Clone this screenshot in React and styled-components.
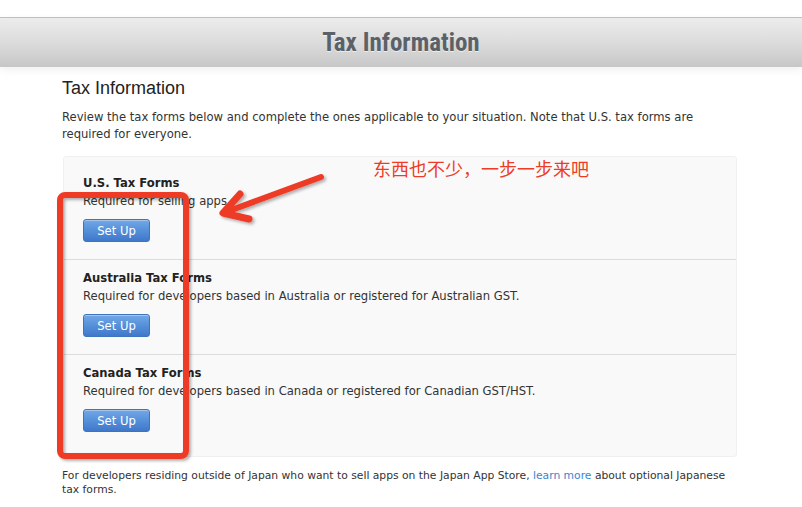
import React from 'react';
import styled, { createGlobalStyle } from 'styled-components';

// Global
const GlobalStyle = createGlobalStyle`
  html, body {
    margin: 0;
    padding: 0;
    background: #ffffff;
  }
  body {
    font-family: "DejaVu Sans", "Liberation Sans", sans-serif;
    color: #333;
  }
`;

// Style
const Page = styled.div`
  position: relative;
  width: 802px;
  height: 507px;
  overflow: hidden;
  padding-top: 17px;
  box-sizing: border-box;
`;

const Header = styled.header`
  height: 49px;
  border-top: 1px solid #bfbfbf;
  background: linear-gradient(to bottom, #ececec 0%, #dcdcdc 50%, #c7c7c7 100%);
  box-shadow: 0 3px 8px rgba(0, 0, 0, 0.06);
  display: flex;
  align-items: center;
  justify-content: center;
`;

const HeaderTitle = styled.h1`
  margin: 0;
  font-family: "Liberation Sans Narrow", "Roboto Condensed", "Liberation Sans", sans-serif;
  font-weight: bold;
  font-size: 25px;
  color: #5b6168;
  text-shadow: 0 1px 0 rgba(255, 255, 255, 0.6);
`;

const Content = styled.main`
  width: 675px;
  margin-left: 62px;
`;

const Title = styled.h2`
  margin: 10px 0 0;
  font-family: "Liberation Sans", sans-serif;
  font-weight: normal;
  font-size: 18px;
  line-height: 22px;
  color: #222;
`;

const Intro = styled.p`
  margin: 10px 0 0;
  font-size: 11.6px;
  line-height: 17px;
  color: #333;
`;

const Panel = styled.section`
  margin: 13px 0 0 1px;
  padding: 8px 0 7px;
  background: #f9f9f9;
  border: 1px solid #f0f0f0;
  border-radius: 3px;
`;

const Row = styled.div`
  padding: 9px 19px 17px;
  border-bottom: ${(p) => (p.last ? 'none' : '1px solid #dcdcdc')};
`;

const RowTitle = styled.h3`
  margin: 0;
  font-size: 11.6px;
  line-height: 18px;
  font-weight: bold;
  color: #222;
`;

const RowText = styled.div`
  font-size: 11.6px;
  line-height: 19px;
  color: #333;
`;

const SetUpButton = styled.button`
  display: block;
  margin-top: 8px;
  width: 67px;
  height: 23px;
  padding: 0;
  border: 1px solid #3e74be;
  border-radius: 3px;
  background: linear-gradient(to bottom, #74a8e6 0%, #5590da 50%, #3f78c9 100%);
  color: #fff;
  font-family: "DejaVu Sans", sans-serif;
  font-size: 11.6px;
  box-shadow: inset 0 1px 0 rgba(255, 255, 255, 0.35);
  cursor: pointer;
`;

const Footnote = styled.p`
  margin: 12px 0 0;
  font-size: 10.75px;
  line-height: 14px;
  color: #333;
`;

const MoreLink = styled.a`
  color: #3a86cc;
  text-decoration: none;
`;

// Annotation layer (drawn over the page)
const Note = styled.span`
  position: absolute;
  left: 373px;
  top: 156px;
  font-family: "Noto Sans CJK SC", sans-serif;
  font-size: 18px;
  line-height: 24px;
  color: #ee3b26;
`;

const Markup = styled.svg`
  position: absolute;
  left: 0;
  top: 0;
  pointer-events: none;
`;

const forms = [
  { name: 'U.S. Tax Forms', text: 'Required for selling apps' },
  {
    name: 'Australia Tax Forms',
    text: 'Required for developers based in Australia or registered for Australian GST.',
  },
  {
    name: 'Canada Tax Forms',
    text: 'Required for developers based in Canada or registered for Canadian GST/HST.',
  },
];

const App = () => {
  return (
    <Page>
      <GlobalStyle />
      <Header>
        <HeaderTitle>Tax Information</HeaderTitle>
      </Header>
      <Content>
        <Title>Tax Information</Title>
        <Intro>
          Review the tax forms below and complete the ones applicable to your situation. Note that U.S. tax forms are
          required for everyone.
        </Intro>
        <Panel>
          {forms.map((f, i) => (
            <Row key={f.name} last={i === forms.length - 1}>
              <RowTitle>{f.name}</RowTitle>
              <RowText>{f.text}</RowText>
              <SetUpButton>Set Up</SetUpButton>
            </Row>
          ))}
        </Panel>
        <Footnote>
          For developers residing outside of Japan who want to sell apps on the Japan App Store,{' '}
          <MoreLink href="#">learn more</MoreLink> about optional Japanese tax forms.
        </Footnote>
      </Content>

      <Note>东西也不少，一步一步来吧</Note>
      <Markup width="802" height="507" viewBox="0 0 802 507">
        <defs>
          <filter id="drop" x="-10%" y="-10%" width="130%" height="130%">
            <feDropShadow dx="2" dy="2" stdDeviation="1.5" floodColor="#000" floodOpacity="0.3" />
          </filter>
        </defs>
        <g filter="url(#drop)" fill="none" stroke="#ee3b26" strokeLinecap="round" strokeLinejoin="round">
          <rect x="60" y="195" width="126" height="261" rx="5" strokeWidth="6" />
          <line x1="321" y1="177" x2="226" y2="212" strokeWidth="6" />
          <polyline points="240,194 223,213 249,219" strokeWidth="7" />
        </g>
      </Markup>
    </Page>
  );
};

export default App;
